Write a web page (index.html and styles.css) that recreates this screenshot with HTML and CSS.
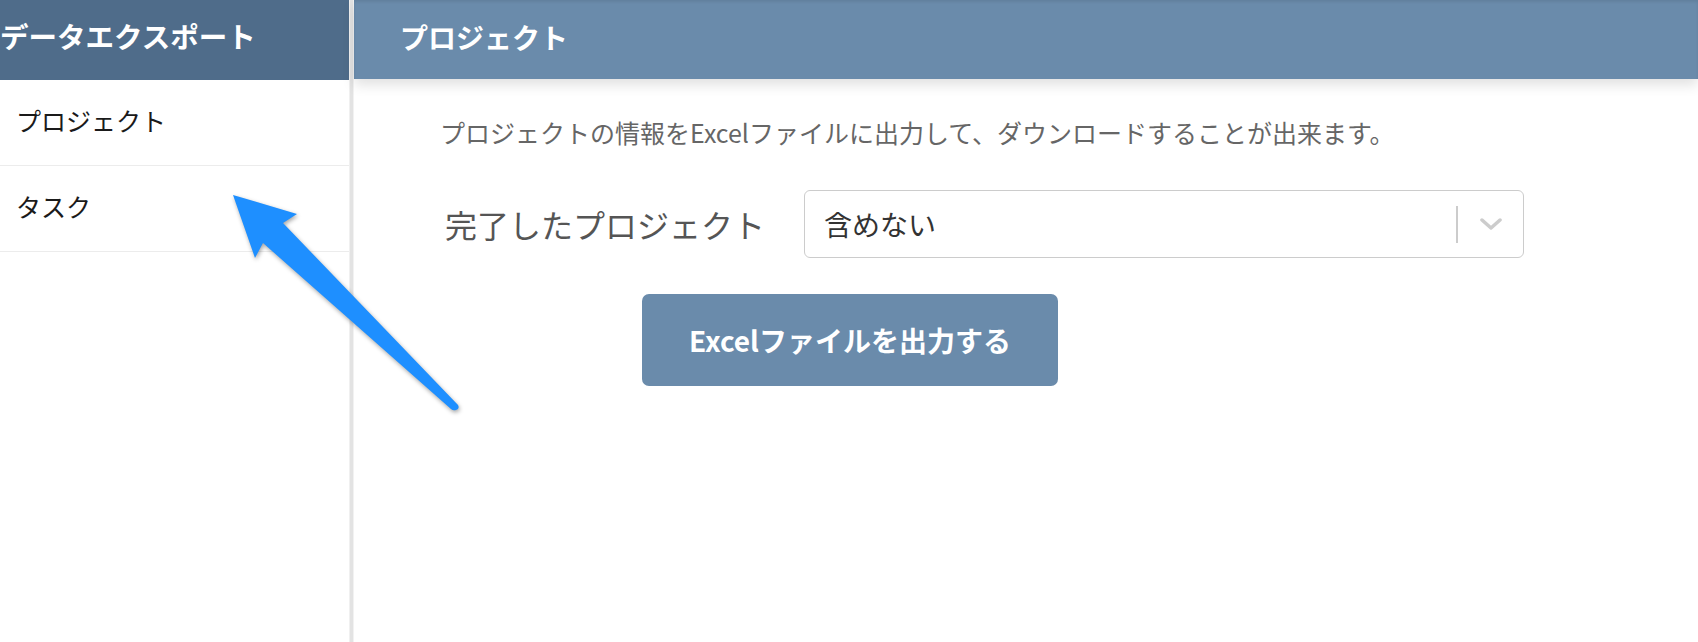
FILE: index.html
```html
<!DOCTYPE html>
<html lang="ja">
<head>
    <meta charset="UTF-8">
    <meta name="viewport" content="width=device-width, initial-scale=1.0">
    <title>データエクスポート</title>
    <link rel="stylesheet" href="styles.css">
</head>
<body>

    <div class="layout">
        <!-- Left menu -->
        <div class="sidebar">
            <div class="sidebar-header">データエクスポート</div>
            <div class="menu-item">プロジェクト</div>
            <div class="menu-item">タスク</div>
        </div>
        <div class="splitter"></div>

        <!-- Export form -->
        <div class="main">
            <div class="main-header">プロジェクト</div>
            <div class="content">
                <p class="description">プロジェクトの情報をExcelファイルに出力して、ダウンロードすることが出来ます。</p>

                <div class="form-row">
                    <label class="form-label">完了したプロジェクト</label>
                    <div class="select">
                        <span class="select-value">含めない</span>
                        <span class="select-sep"></span>
                        <svg class="select-arrow" width="22" height="12" viewBox="0 0 22 12">
                            <path d="M2 2 L11 10 L20 2" fill="none" stroke="#cccccc" stroke-width="3.5" stroke-linecap="round" stroke-linejoin="round"/>
                        </svg>
                    </div>
                </div>

                <button class="export-button">Excelファイルを出力する</button>
            </div>
        </div>
    </div>

    <!-- Annotation arrow -->
    <svg class="annotation" width="1698" height="642" viewBox="0 0 1698 642">
        <path d="M233 195 L297 214 L283 223 L458 405 Q460 409 456 410 Q453 411 451 409 L263 243 L255 258 Z" fill="#1e8fff"/>
    </svg>

</body>
</html>
```

FILE: styles.css
```css
body {
    margin: 0;
    background-color: #fff;
    font-family: 'Noto Sans CJK JP', 'Noto Sans', sans-serif;
    color: #222;
    height: 642px;
    overflow: hidden;
}
.layout {
    display: flex;
    height: 642px;
}
.sidebar {
    width: 349px;
    flex-shrink: 0;
    border-right: 1px solid #f0f0f0;
}
.sidebar-header {
    height: 80px;
    background-color: #4f6c8a;
    color: #fff;
    font-size: 28.5px;
    font-weight: 700;
    display: flex;
    align-items: center;
    padding-left: 0;
    padding-bottom: 10px;
    box-sizing: border-box;
    white-space: nowrap;
}
.menu-item {
    height: 86px;
    display: flex;
    align-items: center;
    padding-left: 16px;
    padding-bottom: 6px;
    font-size: 25px;
    color: #1a1a1a;
    border-bottom: 1px solid #ececec;
    box-sizing: border-box;
}
.splitter {
    width: 3px;
    flex-shrink: 0;
    background-color: #e3e3e3;
    border-right: 1px solid #f2f2f2;
}
.main {
    flex: 1;
}
.main-header {
    height: 79px;
    background-color: #6a8bab;
    color: #fff;
    font-size: 28px;
    font-weight: 700;
    display: flex;
    align-items: center;
    padding-left: 46px;
    padding-bottom: 6px;
    box-sizing: border-box;
    box-shadow: 0 6px 12px rgba(0, 0, 0, 0.12), inset 0 2px 3px rgba(0, 0, 0, 0.08);
}
.content {
    padding: 34px 0 0 86px;
}
.description {
    margin: 0;
    font-size: 25px;
    line-height: 38px;
    color: #666;
}
.form-row {
    display: flex;
    align-items: center;
    margin-top: 39px;
    padding-left: 5px;
}
.form-label {
    font-size: 32px;
    color: #555;
    width: 359px;
    flex-shrink: 0;
}
.select {
    width: 720px;
    height: 68px;
    border: 1px solid #ccc;
    border-radius: 6px;
    box-sizing: border-box;
    display: flex;
    align-items: center;
    padding-left: 19px;
}
.select-value {
    flex: 1;
    font-size: 28px;
    color: #333;
}
.select-sep {
    width: 2px;
    height: 37px;
    background-color: #ccc;
}
.select-arrow {
    margin: 0 21px 0 22px;
}
.export-button {
    display: block;
    margin: 36px 0 0 202px;
    width: 416px;
    height: 92px;
    background-color: #6a8bab;
    border: none;
    border-radius: 7px;
    color: #fff;
    font-family: 'Noto Sans CJK JP', 'Noto Sans', sans-serif;
    font-size: 28px;
    font-weight: 700;
    cursor: pointer;
}
.annotation {
    position: absolute;
    left: 0;
    top: 0;
    pointer-events: none;
    filter: drop-shadow(1px 2px 2px rgba(0, 0, 0, 0.35));
}
```
